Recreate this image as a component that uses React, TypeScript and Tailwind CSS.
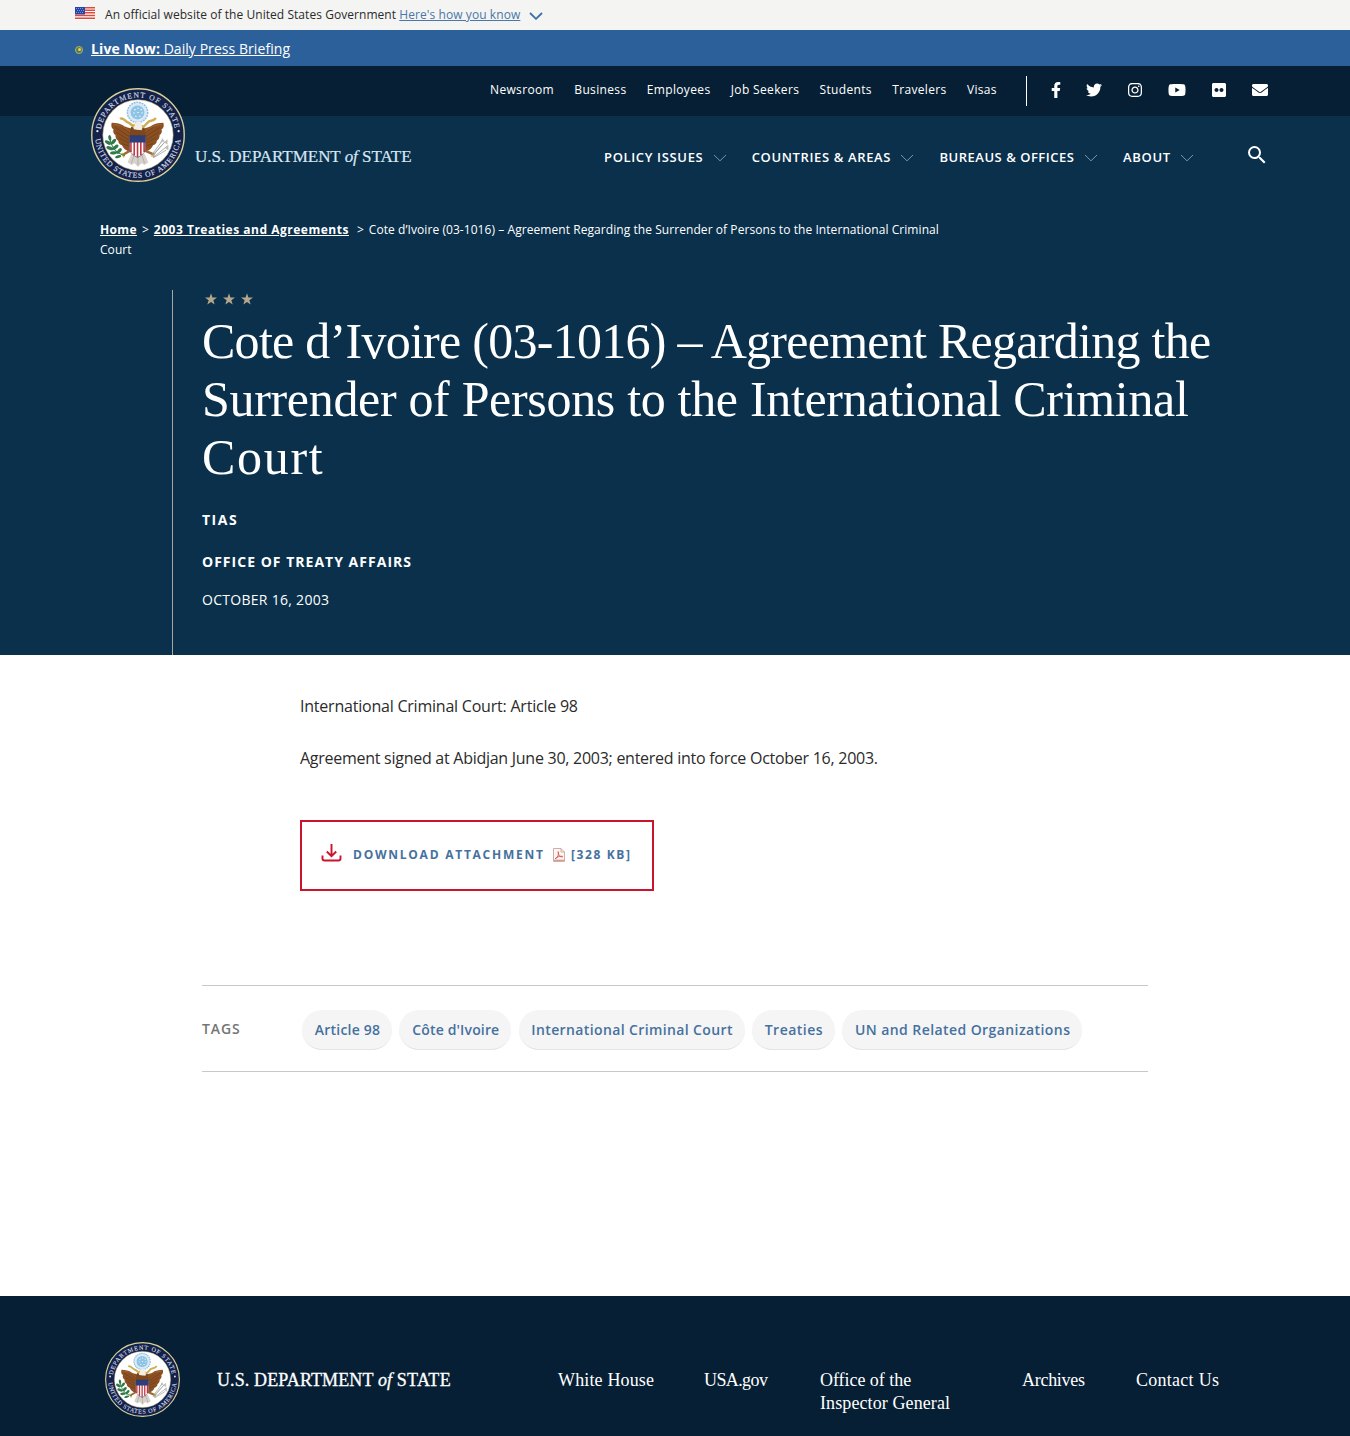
import { useId } from "react";
import {
  FaFacebookF,
  FaTwitter,
  FaInstagram,
  FaYoutube,
  FaFlickr,
  FaEnvelope,
} from "react-icons/fa";
import { MdSearch } from "react-icons/md";

const topLinks = ["Newsroom", "Business", "Employees", "Job Seekers", "Students", "Travelers", "Visas"];
const mainLinks = [
  { label: "POLICY ISSUES", tracking: "tracking-[0.65px]" },
  { label: "COUNTRIES & AREAS", tracking: "tracking-[0.63px]" },
  { label: "BUREAUS & OFFICES", tracking: "tracking-[0.52px]" },
  { label: "ABOUT", tracking: "tracking-[0.7px]" },
];
const tags = [
  { label: "Article 98", style: "w-[90px] tracking-[0.2px]" },
  { label: "Côte d'Ivoire", style: "w-[112px] tracking-[0.15px]" },
  { label: "International Criminal Court", style: "w-[226px] tracking-[0.38px]" },
  { label: "Treaties", style: "w-[83px] tracking-[0.48px]" },
  { label: "UN and Related Organizations", style: "w-[240px] tracking-[0.42px]" },
];

function Wing() {
  return (
    <g>
      <path
        d="M47 46 C43 42 40 43 36 41 C32 38 27 37 22 37 C21 41 22 43 24 44 C23 46 24 49 26 50 C26 53 27 55 29 56 C29 59 31 60 33 61 C34 64 37 67 42 68 L47 62Z"
        fill="#8a4f22"
      />
      <path
        d="M26 42 L41 52 M27 47 L41 56 M30 53 L41 59 M33 59 L41 62 M31 40 L42 48"
        stroke="#6b3a16"
        strokeWidth="0.7"
        fill="none"
      />
      <path d="M24 39 C31 39 36 42 42 47" stroke="#a9682f" strokeWidth="1" fill="none" />
    </g>
  );
}

function Seal({ className }: { className: string }) {
  const id = useId();
  return (
    <svg viewBox="0 0 100 100" className={className} aria-label="Department of State seal">
      <defs>
        <path id={`${id}t`} d="M10.2 50 A39.8 39.8 0 0 1 89.8 50" />
        <path id={`${id}b`} d="M4.4 50 A45.600 45.600 0 0 0 95.6 50" />
      </defs>
      <circle cx="50" cy="50" r="49.2" fill="#14224a" stroke="#d8cf9a" strokeWidth="1.5" />
      <circle cx="50" cy="50" r="37.4" fill="#ffffff" stroke="#c9c08d" strokeWidth="0.6" />
      <g className="font-['Liberation_Serif',serif]" fontSize="8.2" fill="#d3dae8" stroke="#d3dae8" strokeWidth="0.15">
        <text textAnchor="middle" letterSpacing="1.1">
          <textPath href={`#${id}t`} startOffset="50%">DEPARTMENT OF STATE</textPath>
        </text>
        <text textAnchor="middle" letterSpacing="0.9">
          <textPath href={`#${id}b`} startOffset="50%">UNITED STATES OF AMERICA</textPath>
        </text>
      </g>
      <circle cx="6.8" cy="46" r="1.2" fill="#e6e9ef" />
      <circle cx="93.2" cy="46" r="1.2" fill="#e6e9ef" />
      {/* glory */}
      <circle cx="49.500" cy="26" r="10.8" fill="#d9eaf6" stroke="#8fbfe2" strokeWidth="1.6" strokeDasharray="2 0.9" />
      <circle cx="49.500" cy="26" r="7.4" fill="#8fc3e6" />
      <path d="M46 23h1.4M49.3 21.5h1.4M52.8 23h1.4M45 26.5h1.4M49.3 26h1.4M53.6 26.5h1.4M47 30h1.4M51.4 30h1.4" stroke="#fff" strokeWidth="1.1" />
      {/* wings */}
      <Wing />
      <g transform="translate(99 0) scale(-1 1)"><Wing /></g>
      <path d="M42 43 C44 38 56 37 57 43 L59 54 H41Z" fill="#7c471f" />
      {/* ribbon */}
      <path d="M31 33 C34 30 36 36 40 37 C43 38 45 42 49 43 C55 44 58 39 61 36 C64 34 66 36 69 32" fill="none" stroke="#cfae58" strokeWidth="2.6" />
      {/* head */}
      <path d="M45.500 44 C44.500 38 48 35.5 51 36 C54 36 55 40 54 45Z" fill="#f1eee6" />
      <path d="M46.6 38 L43.4 39.8 L46.2 41Z" fill="#dca12c" />
      {/* tail and legs */}
      <path d="M43 70 L39 79 L43 82 L46.500 80 L50 84 L53.500 80 L57 82 L61 79 L57 70Z" fill="#d8d2cc" />
      <path d="M46 71 L43 80 M50 71 V82 M54 71 L57 80" stroke="#aaa098" strokeWidth="0.8" />
      <path d="M41 67 L34 71 M58 67 L67 71" stroke="#a3672d" strokeWidth="2.6" />
      <path d="M33 69 L35 74 M66 74 L68 69" stroke="#dcb04b" strokeWidth="1.6" />
      {/* shield */}
      <path d="M41 51 H58 V64 C58 69 54 71.500 49.500 74 C45 71.500 41 69 41 64Z" fill="#fff" />
      <path d="M42.500 56V68M46 56V71.500M49.500 56V73.500M53 56V71.500M56.500 56V68" stroke="#c03643" strokeWidth="1.700" />
      <path d="M41 50.500 H58 V58 H41Z" fill="#2c3f7c" />
      <path d="M41 51 H58 V64 C58 69 54 71.500 49.500 74 C45 71.500 41 69 41 64Z" fill="none" stroke="#3c3350" strokeWidth="0.6" />
      {/* olive branch */}
      <path d="M36 72 C28 70 22 64 20 54" fill="none" stroke="#3f7a45" strokeWidth="1.100" />
      <g fill="#2f7a48">
        <ellipse cx="18" cy="58" rx="3.600" ry="1.800" transform="rotate(30 18 58)" />
        <ellipse cx="20" cy="64" rx="3.800" ry="1.800" transform="rotate(20 20 64)" />
        <ellipse cx="24" cy="69" rx="3.800" ry="1.800" transform="rotate(-5 24 69)" />
        <ellipse cx="24" cy="57" rx="3.600" ry="1.800" transform="rotate(-50 24 57)" />
        <ellipse cx="26" cy="63" rx="3.800" ry="1.800" transform="rotate(-40 26 63)" />
        <ellipse cx="30" cy="67" rx="3.600" ry="1.800" transform="rotate(-50 30 67)" />
        <ellipse cx="20" cy="53" rx="3" ry="1.600" transform="rotate(80 20 53)" />
        <ellipse cx="29" cy="73" rx="3.400" ry="1.500" transform="rotate(-15 29 73)" />
      </g>
      {/* arrows */}
      <path d="M64 73 L79 57 M64 72 L76 56 M66 74 L81 62 M65 73 L78 58 M67 74 L80 66" stroke="#a2a4a4" strokeWidth="0.900" />
      <path d="M74 58 L76 54 L78 57 M78 58 L81 55 L81 60 M79 64 L82 61 L82 66" fill="#c4c5c3" stroke="#a2a4a4" strokeWidth="0.500" />
    </svg>
  );
}

function Flag() {
  return (
    <svg viewBox="0 0 20 13" className="h-[13px] w-[20px]" aria-hidden="true">
      <rect width="20" height="13" fill="#fff" />
      <path d="M0 .75h20M0 3.250h20M0 5.750h20M0 8.500h20M0 11.200h20" stroke="#dc4a3f" strokeWidth="1.400" />
      <rect width="10" height="7.500" fill="#2846a8" />
      <path d="M1 1.500h8M2 3.500h7M1 5.500h8" stroke="#93a4dc" strokeWidth=".8" strokeDasharray="1 1" />
    </svg>
  );
}

function Chevron({ className }: { className: string }) {
  return (
    <svg viewBox="0 0 14 8" className={className} fill="none" stroke="currentColor" aria-hidden="true">
      <path d="M1 1 L7 6.800 L13 1" />
    </svg>
  );
}

function Star() {
  return (
    <svg viewBox="0 0 24 23" className="h-[12px] w-[12px] text-[#b5a68c]" fill="currentColor" aria-hidden="true">
      <path d="M12 0 L14.900 8.500 H24 L16.700 13.900 L19.400 22.600 L12 17.400 L4.600 22.600 L7.300 13.900 L0 8.500 H9.100Z" />
    </svg>
  );
}

function DownloadIcon() {
  return (
    <svg viewBox="0 0 21 19" className="h-[19px] w-[21px] text-[#c8152d]" fill="none" stroke="currentColor" strokeWidth="1.900" aria-hidden="true">
      <path d="M10.500 1V13M5.800 8.500L10.500 13.200L15.200 8.500" />
      <path d="M1.500 12.500V15.500Q1.500 17.500 3.500 17.500H17.500Q19.500 17.500 19.500 15.500V12.500" />
    </svg>
  );
}

function PdfIcon() {
  return (
    <svg viewBox="0 0 12 14" className="h-[14px] w-[12px]" fill="none" stroke="#d98f84" strokeWidth="0.900" aria-hidden="true">
      <path d="M.5 .5H8L11.500 4V13.500H.5Z" fill="#fdf6f3" stroke="#c9a59d" />
      <path d="M8 .5V4H11.500" stroke="#c9a59d" />
      <path d="M2.500 11C4.500 9.500 6 6.500 5.500 4C5 2.800 4.700 5 6 7.200C7 8.900 9 9.300 9.800 8.700C9.500 7.600 4.500 8.500 2.700 10Z" stroke="#cf5a49" />
      <path d="M1 12.300H11" strokeWidth="1.200" />
    </svg>
  );
}

export default function App() {
  return (
    <div className="flex h-[1436px] w-full flex-col overflow-hidden bg-white font-['Open_Sans',sans-serif] text-[#2b2b2b]">
      <div className="flex h-[30px] shrink-0 items-center bg-[#f4f4f3] pl-[75px] text-[12px] leading-[20px]">
        <div className="mb-[4px]"><Flag /></div>
        <p className="ml-[10px] whitespace-nowrap tracking-[0.05px]">
          An official website of the United States Government{" "}
          <a className="tracking-[0.08px] text-[#4a77a8] underline">Here's how you know</a>
        </p>
        <Chevron className="ml-[8.500px] mt-[2px] h-[8px] w-[14px] stroke-[1.800] text-[#3f6ea5]" />
      </div>

      <div className="flex h-[36px] shrink-0 items-center bg-[#2c609b] pl-[75px] text-[14px] text-white">
        <span className="mt-[3px] flex h-[8px] w-[8px] items-center justify-center rounded-full border border-[#b9b455] bg-[#4b7a63]">
          <span className="h-[3px] w-[3px] rounded-full bg-[#f0d43c]" />
        </span>
        <a className="ml-[8px] whitespace-nowrap pt-[1px] underline">
          <b className="tracking-[0.1px]">Live Now:</b> <span className="tracking-[0.06px]">Daily Press Briefing</span>
        </a>
      </div>

      <header className="relative shrink-0 text-white">
        <div className="flex h-[50px] bg-[#071f34] pl-[490px]">
          <nav className="flex h-[48px] w-[507px] items-center justify-between text-[12px] tracking-[0.35px]">
            {topLinks.map((l) => (
              <a key={l} className="whitespace-nowrap">{l}</a>
            ))}
          </nav>
          <div className="ml-[29px] mt-[10px] h-[30px] w-px bg-white" />
          <div className="ml-[20.500px] flex h-[48px] items-center text-[16px]">
            <FaFacebookF />
            <FaTwitter className="ml-[22px]" />
            <FaInstagram className="ml-[25px]" />
            <FaYoutube className="ml-[25px] text-[18px]" />
            <FaFlickr className="ml-[25px]" />
            <FaEnvelope className="ml-[25px]" />
          </div>
        </div>
        <div className="flex h-[89px] items-start bg-[#0a304c] pl-[195px]">
          <div className="mt-[29px] w-[217px] whitespace-nowrap font-['Liberation_Serif',serif] text-[17px] leading-[24px] tracking-[-0.030px] text-[#d9e7f3] [-webkit-text-stroke:0.2px_#d9e7f3]">
            U.S. DEPARTMENT <i>of</i> STATE
          </div>
          <nav className="ml-[192px] mt-[31px] flex text-[13px] font-semibold leading-[20px]">
            {mainLinks.map((l) => (
              <a key={l.label} className={`${l.tracking} mr-[25px] flex items-center whitespace-nowrap`}>
                {l.label}
                <Chevron className="ml-[9.400px] mt-[2px] h-[8px] w-[14px] text-[#6f97b6]" />
              </a>
            ))}
          </nav>
          <MdSearch className="ml-[25.500px] mt-[27px] text-[24px]" />
        </div>
        <Seal className="absolute left-[91px] top-[22px] h-[94px] w-[94px]" />
      </header>

      <section className="flex h-[450px] shrink-0 flex-col bg-[#0a304c] text-white">
        <p className="ml-[100px] mt-[15px] w-[850px] text-[12px] leading-[20px] tracking-[0.064px]">
          <b className="tracking-[0.350px] underline">Home</b>
          <span className="ml-[5px] mr-[5px]">&gt;</span>
          <b className="tracking-[0.510px] underline">2003 Treaties and Agreements</b>
          <span className="ml-[8px] mr-[5px]">&gt;</span>
          Cote d’Ivoire (03-1016) – Agreement Regarding the Surrender of Persons to the International Criminal Court
        </p>
        <div className="ml-[172px] mt-[30px] grow border-l border-[#a8a79f] pl-[29px]">
          <div className="ml-[3px] flex gap-[6px] pt-[3px]">
            <Star />
            <Star />
            <Star />
          </div>
          <h1 className="mt-[7px] whitespace-nowrap font-['Liberation_Serif',serif] text-[50px] leading-[58px]">
            <span className="block tracking-[-0.730px]">Cote d’Ivoire (03-1016) – Agreement Regarding the</span>
            <span className="block tracking-[-0.320px]">Surrender of Persons to the International Criminal</span>
            <span className="block tracking-[1.700px]">Court</span>
          </h1>
          <p className="mt-[24px] text-[14px] font-bold leading-[20px] tracking-[1.500px]">TIAS</p>
          <p className="mt-[22px] text-[14px] font-bold leading-[20px] tracking-[1.017px]">OFFICE OF TREATY AFFAIRS</p>
          <p className="mt-[18px] text-[14px] leading-[20px] tracking-[0.286px]">OCTOBER 16, 2003</p>
        </div>
      </section>

      <main className="flex h-[641px] shrink-0 flex-col">
        <div className="ml-[300px] pt-[38px] text-[16px] leading-[26px]">
          <p className="tracking-[-0.219px]">International Criminal Court: Article 98</p>
          <p className="mt-[26px] tracking-[-0.267px]">
            Agreement signed at Abidjan June 30, 2003; entered into force October 16, 2003.
          </p>
          <a className="mt-[49px] flex h-[71px] w-[354px] items-center border-2 border-[#c8152d] pl-[19px] text-[12px] font-bold leading-[20px] tracking-[1.750px] text-[#45719f]">
            <span className="mb-[7px]"><DownloadIcon /></span>
            <span className="ml-[11px] w-[200px] whitespace-nowrap pb-[1px]">DOWNLOAD ATTACHMENT</span>
            <span className="mb-[1px]"><PdfIcon /></span>
            <span className="ml-[6px] whitespace-nowrap pb-[1px] tracking-[1.600px]">[328 KB]</span>
          </a>
        </div>
        <div className="ml-[202px] mt-[94px] flex h-[87px] w-[946px] items-center border-y border-[#c5c9cc]">
          <span className="w-[100px] text-[14px] font-semibold tracking-[0.900px] text-[#757575]">TAGS</span>
          <div className="flex gap-[7.300px] pt-[2px]">
            {tags.map((t) => (
              <a
                key={t.label}
                className={`${t.style} flex h-[40px] shrink-0 items-center justify-center whitespace-nowrap rounded-full border-b border-[#e4e4e4] bg-[#f5f5f5] pl-px text-[14px] font-semibold text-[#45719f]`}
              >
                {t.label}
              </a>
            ))}
          </div>
        </div>
      </main>

      <footer className="flex grow items-start bg-[#071f34] pl-[105px] font-['Liberation_Serif',serif] text-white">
        <Seal className="mt-[46px] h-[75px] w-[75px] shrink-0" />
        <div className="ml-[37px] mt-[72px] w-[341px] whitespace-nowrap text-[18px] leading-[24px] tracking-[0.120px] [-webkit-text-stroke:0.3px_#ffffff]">
          U.S. DEPARTMENT <i>of</i> <span className="tracking-[0.350px]">STATE</span>
        </div>
        <nav className="mt-[73px] flex whitespace-nowrap text-[18px] leading-[23px]">
          <a className="w-[146px] tracking-[0.150px]">White House</a>
          <a className="w-[116px] tracking-[-0.600px]">USA.gov</a>
          <a className="w-[202px]">
            <span className="block tracking-[-0.040px]">Office of the</span>
            <span className="block tracking-[0.100px]">Inspector General</span>
          </a>
          <a className="w-[114px] tracking-[-0.280px]">Archives</a>
          <a className="tracking-[0.270px]">Contact Us</a>
        </nav>
      </footer>
    </div>
  );
}
